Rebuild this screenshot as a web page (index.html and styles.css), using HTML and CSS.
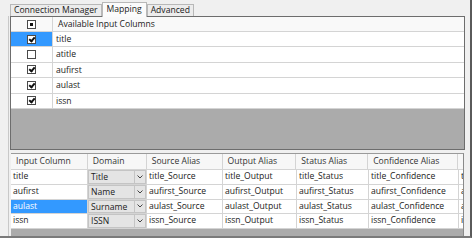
FILE: index.html
```html
<!DOCTYPE html>
<html lang="en">
<head>
  <meta charset="UTF-8" />
  <title>Mapping</title>
  <link rel="stylesheet" href="styles.css">
</head>
<body>

  <div class="window">
    <div class="tabs">
      <div class="tab">Connection Manager</div>
      <div class="tab active">Mapping</div>
      <div class="tab">Advanced</div>
    </div>

    <div class="tab-page">
      <div class="input-grid">
        <div class="in-row in-head">
          <div class="cb-cell"><span class="cb mixed"></span></div>
          <div class="name-cell">Available Input Columns</div>
        </div>
        <div class="in-row">
          <div class="cb-cell selected"><span class="cb checked"></span></div>
          <div class="name-cell">title</div>
        </div>
        <div class="in-row">
          <div class="cb-cell"><span class="cb"></span></div>
          <div class="name-cell">atitle</div>
        </div>
        <div class="in-row">
          <div class="cb-cell"><span class="cb checked"></span></div>
          <div class="name-cell">aufirst</div>
        </div>
        <div class="in-row">
          <div class="cb-cell"><span class="cb checked"></span></div>
          <div class="name-cell">aulast</div>
        </div>
        <div class="in-row">
          <div class="cb-cell"><span class="cb checked"></span></div>
          <div class="name-cell">issn</div>
        </div>
      </div>

      <div class="map-grid">
        <div class="map-row map-head">
          <div class="c c1">Input Column</div>
          <div class="c c2">Domain</div>
          <div class="c c3">Source Alias</div>
          <div class="c c4">Output Alias</div>
          <div class="c c5">Status Alias</div>
          <div class="c c6">Confidence Alias</div>
          <div class="c c7"></div>
        </div>
        <div class="map-row">
          <div class="c c1">title</div>
          <div class="c c2"><span class="combo"><span class="combo-text">Title</span><span class="combo-btn"><svg width="6" height="4" viewBox="0 0 6 4"><path d="M0.5 0.5 L3 3 L5.5 0.5" fill="none" stroke="#444" stroke-width="1"/></svg></span></span></div>
          <div class="c c3">title_Source</div>
          <div class="c c4">title_Output</div>
          <div class="c c5">title_Status</div>
          <div class="c c6">title_Confidence</div>
          <div class="c c7">t</div>
        </div>
        <div class="map-row">
          <div class="c c1">aufirst</div>
          <div class="c c2"><span class="combo"><span class="combo-text">Name</span><span class="combo-btn"><svg width="6" height="4" viewBox="0 0 6 4"><path d="M0.5 0.5 L3 3 L5.5 0.5" fill="none" stroke="#444" stroke-width="1"/></svg></span></span></div>
          <div class="c c3">aufirst_Source</div>
          <div class="c c4">aufirst_Output</div>
          <div class="c c5">aufirst_Status</div>
          <div class="c c6">aufirst_Confidence</div>
          <div class="c c7">a</div>
        </div>
        <div class="map-row">
          <div class="c c1 selected">aulast</div>
          <div class="c c2"><span class="combo"><span class="combo-text">Surname</span><span class="combo-btn"><svg width="6" height="4" viewBox="0 0 6 4"><path d="M0.5 0.5 L3 3 L5.5 0.5" fill="none" stroke="#444" stroke-width="1"/></svg></span></span></div>
          <div class="c c3">aulast_Source</div>
          <div class="c c4">aulast_Output</div>
          <div class="c c5">aulast_Status</div>
          <div class="c c6">aulast_Confidence</div>
          <div class="c c7">a</div>
        </div>
        <div class="map-row">
          <div class="c c1">issn</div>
          <div class="c c2"><span class="combo"><span class="combo-text">ISSN</span><span class="combo-btn"><svg width="6" height="4" viewBox="0 0 6 4"><path d="M0.5 0.5 L3 3 L5.5 0.5" fill="none" stroke="#444" stroke-width="1"/></svg></span></span></div>
          <div class="c c3">issn_Source</div>
          <div class="c c4">issn_Output</div>
          <div class="c c5">issn_Status</div>
          <div class="c c6">issn_Confidence</div>
          <div class="c c7">i</div>
        </div>
      </div>
    </div>
  </div>

</body>
</html>
```

FILE: styles.css
```css
:root {
  --bg: #f0f0f0;
  --grid-border: #6d6d6d;
  --line: #d4d4d4;
  --empty: #ababab;
  --select: #3399ff;
  --text: #1a1a1a;
}

* {
  box-sizing: border-box;
}

body {
  margin: 0;
  background: #ffffff;
  font-family: 'Open Sans', 'Noto Sans', sans-serif;
  font-size: 8.6px;
  color: var(--text);
}

.window {
  width: 472px;
  height: 238px;
  background: var(--bg);
  border-right: 2px solid #5a5a5a;
  border-bottom: 2px solid #7a7a7a;
  overflow: hidden;
}

.tabs {
  display: flex;
  align-items: flex-end;
  height: 16px;
  padding-left: 10px;
}

.tab {
  height: 12px;
  line-height: 11px;
  padding: 0 3px;
  border: 1px solid #b8b8b8;
  border-bottom: none;
  background: #ececec;
  white-space: nowrap;
}

.tab.active {
  height: 15px;
  line-height: 13px;
  background: #fbfbfb;
  padding: 0 4px;
  margin-bottom: -1px;
  position: relative;
}

.tab-page {
  margin-left: 8px;
  height: 220px;
  border-left: 1px solid #c8c8c8;
  padding-left: 1px;
}

.input-grid {
  width: 455px;
  height: 134px;
  border: 1px solid var(--grid-border);
  background: var(--empty);
}

.in-row {
  display: flex;
  height: 15.4px;
  background: #ffffff;
  border-bottom: 1px solid var(--line);
}

.in-row.in-head {
  height: 15px;
  background: #f9f9f9;
}

.cb-cell {
  width: 42px;
  display: flex;
  align-items: center;
  justify-content: center;
  border-right: 1px solid var(--line);
}

.cb-cell.selected {
  background: var(--select);
}

.name-cell {
  flex: 1;
  padding-left: 3px;
  line-height: 14px;
}

.in-head .name-cell {
  padding-left: 5px;
}

.cb {
  width: 9px;
  height: 9px;
  border: 1px solid #4a4a4a;
  background: #ffffff;
  position: relative;
}

.cb.mixed::after {
  content: "";
  position: absolute;
  left: 2px;
  top: 2px;
  width: 3px;
  height: 3px;
  background: #111;
}

.cb.checked::after {
  content: "";
  position: absolute;
  left: 2px;
  top: 0px;
  width: 2px;
  height: 4px;
  border-right: 2px solid #111;
  border-bottom: 2px solid #111;
  transform: rotate(40deg);
}

.map-grid {
  width: 453px;
  height: 83px;
  margin: 3px 0 0 1px;
  border-top: 1px solid #9a9a9a;
  border-right: 1px solid #8a8a8a;
  background: var(--empty);
}

.map-row {
  display: flex;
  height: 14.75px;
  background: #ffffff;
  border-bottom: 1px solid var(--line);
}

.map-row.map-head {
  height: 16px;
  background: #f7f7f7;
  color: #333;
}

.c {
  border-right: 1px solid var(--line);
  padding-left: 2px;
  line-height: 13px;
  white-space: nowrap;
  overflow: hidden;
}

.map-head .c {
  line-height: 15px;
  padding-left: 5px;
}

.c1 { width: 77px; }
.c2 { width: 59px; padding: 0 !important; }
.c3 { width: 76px; }
.c4 { width: 74px; }
.c5 { width: 72px; }
.c6 { width: 90px; }
.c7 { flex: 1; border-right: none; }

.map-head .c2 {
  padding-left: 5px !important;
}

.c.selected {
  background: var(--select);
  color: #ffffff;
}

.combo {
  display: flex;
  height: 100%;
  background: #e4e4e4;
  border: 1px solid #c4c4c4;
}

.combo-text {
  flex: 1;
  padding-left: 2px;
  line-height: 12px;
}

.combo-btn {
  width: 11px;
  border-left: 1px solid #c4c4c4;
  display: flex;
  align-items: center;
  justify-content: center;
}
```
